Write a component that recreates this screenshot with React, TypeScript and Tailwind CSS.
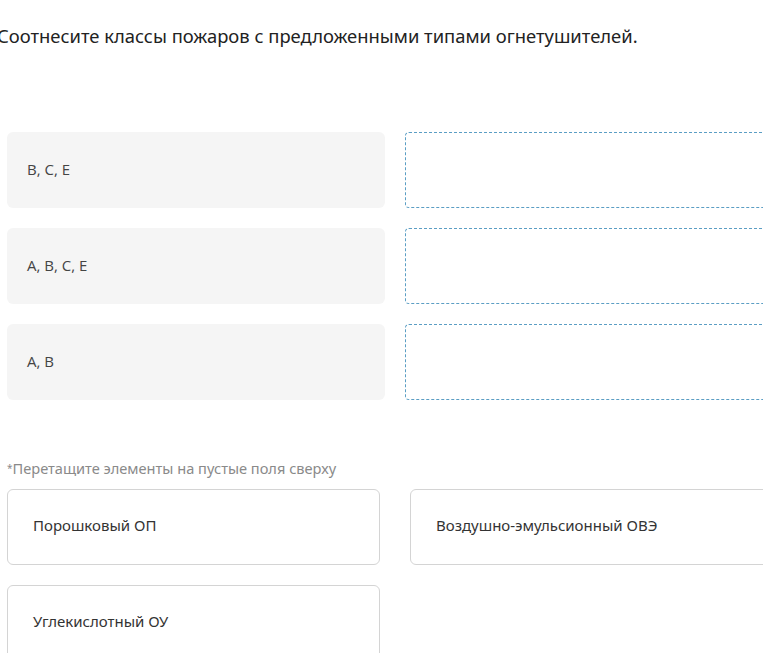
const classes = ['B, C, E', 'A, B, C, E', 'A, B'];

const options = ['Порошковый ОП', 'Воздушно-эмульсионный ОВЭ', 'Углекислотный ОУ'];

export default function App() {
  return (
    <div className="w-[763px] h-[653px] overflow-hidden bg-white" style={{ fontFamily: '"Noto Sans", sans-serif' }}>
      <div className="w-[800px] pl-[7px]">
        <h1 className="-ml-[10px] pt-[23px] text-[18.4px] leading-[26px] text-[#222] font-normal">
          Соотнесите классы пожаров с предложенными типами огнетушителей.
        </h1>

        <div className="mt-[83px] flex flex-col gap-[20px]">
          {classes.map((c) => (
            <div key={c} className="flex gap-[20px]">
              <div
                className="w-[378px] h-[76px] rounded-[6px] bg-[#f5f5f5] flex items-center pl-[20px] pb-[2px] text-[15px] text-[#444]"
                style={{ fontFamily: '"Open Sans", sans-serif' }}
              >
                {c}
              </div>
              <div className="w-[378px] h-[76px] rounded-[4px] border border-dashed border-[#5b9ec4]" />
            </div>
          ))}
        </div>

        <div className="mt-[58px] text-[14.6px] leading-[20px] text-[#8a8a8a]">
          <span className="text-[10px] align-top">*</span>Перетащите элементы на пустые поля сверху
        </div>

        <div className="mt-[11px] grid grid-cols-[373px_373px] gap-x-[30px] gap-y-[20px]">
          {options.map((o) => (
            <div
              key={o}
              className="h-[76px] rounded-[6px] border border-[#d4d4d4] flex items-center pl-[25px] pb-[3px] text-[15px] text-[#333]"
            >
              {o}
            </div>
          ))}
        </div>
      </div>
    </div>
  );
}
